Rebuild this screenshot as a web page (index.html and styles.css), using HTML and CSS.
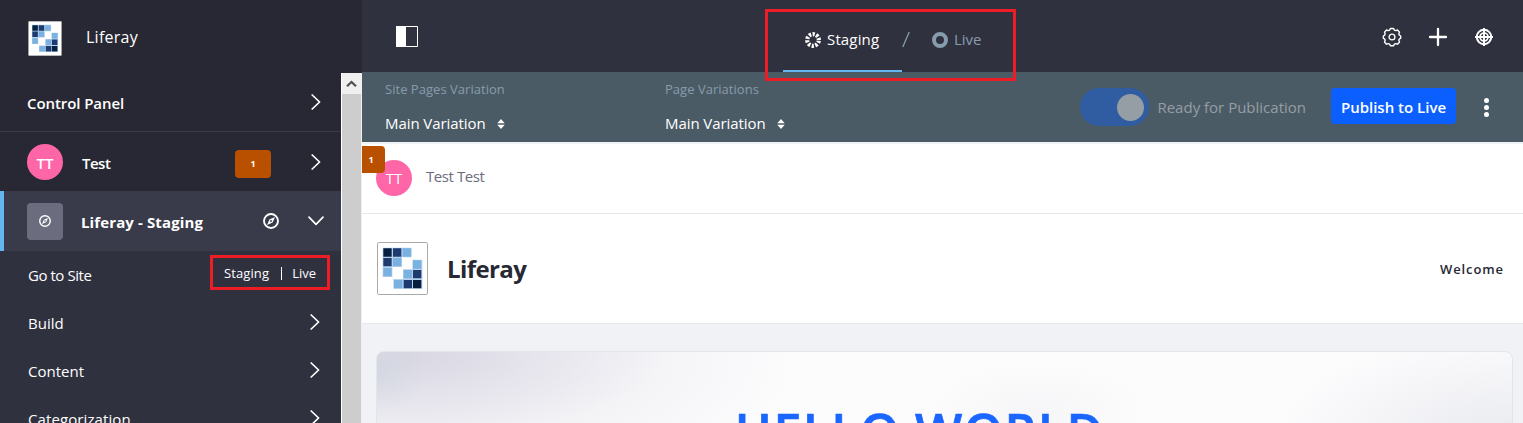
FILE: index.html
```html
<!DOCTYPE html>
<html lang="en">
<head>
<meta charset="utf-8">
<title>Liferay</title>
<link rel="stylesheet" href="styles.css">
</head>
<body>
<svg class="defs" width="0" height="0">
  <symbol id="logo" viewBox="0 0 153 159">
    <rect x="1.5" y="1.5" width="150" height="156" rx="4" fill="#fff" stroke="#a9a9a9" stroke-width="3"/>
    <path fill="#b5d1ee" d="M17 17h87v29H75v29H46v30H17zM106 53h30v87H49v-29h29V82h28z"/>
    <path fill="#06203f" d="M19 19h25v25H19zM108 114h25v25h-25z"/>
    <path fill="#1d3b6e" d="M48 19h25v25H48zM19 48h25v25H19zM108 84h25v25h-25zM80 114h25v25H80z"/>
    <path fill="#7ab1e1" d="M77 19h25v25H77zM48 48h25v25H48zM19 78h25v25H19zM108 55h25v25h-25zM80 84h25v25H80zM51 114h25v25H51z"/>
  </symbol>
  <symbol id="chev" viewBox="0 0 10 16"><path d="M1.2 1 8.6 8l-7.4 7" fill="none" stroke="currentColor" stroke-width="1.7" stroke-linecap="round" stroke-linejoin="round"/></symbol>
  <symbol id="compass" viewBox="0 0 16 16"><circle cx="8" cy="8" r="7" fill="none" stroke="currentColor" stroke-width="1.9"/><path d="M12 4 9.6 9.6 4 12l2.4-5.6z" fill="currentColor"/><circle cx="8" cy="8" r="1.1" fill="#555668"/></symbol>
  <symbol id="sort" viewBox="0 0 8 10"><path d="M4 0 7.7 4.3H.3zM4 10 .3 5.700h7.400z" fill="currentColor"/></symbol>
</svg>

<div class="app">
  <aside class="side">
    <header class="brand"><svg class="brand-logo"><use href="#logo"/></svg><span class="brand-name">Liferay</span></header>
    <div class="side-body">
      <nav class="menu">
        <a class="row panel"><span class="t-panel">Control Panel</span><svg class="chev"><use href="#chev"/></svg></a>
        <a class="row user"><span class="avatar bold">TT</span><span class="t-test">Test</span><span class="count">1</span><svg class="chev"><use href="#chev"/></svg></a>
        <a class="row site"><span class="site-icon"><svg><use href="#compass"/></svg></span><span class="t-site">Liferay - Staging</span><svg class="compass"><use href="#compass"/></svg><svg class="down" viewBox="0 0 16 10"><path d="M1 1.2 8 8.4l7-7.2" fill="none" stroke="currentColor" stroke-width="1.7" stroke-linecap="round" stroke-linejoin="round"/></svg></a>
        <div class="sub"><span class="t-goto">Go to Site</span><span class="goto-links"><span class="gs">Staging</span><i></i><span class="gl">Live</span></span></div>
        <a class="sub"><span>Build</span><svg class="chev"><use href="#chev"/></svg></a>
        <a class="sub"><span>Content</span><svg class="chev"><use href="#chev"/></svg></a>
        <a class="sub"><span class="t-cat">Categorization</span><svg class="chev"><use href="#chev"/></svg></a>
      </nav>
      <div class="scroll"><div class="scroll-up"><svg width="11" height="8" viewBox="0 0 11 8"><path d="M1 6.3 5.5 2 10 6.3" fill="none" stroke="#505050" stroke-width="2.2"/></svg></div></div>
    </div>
  </aside>

  <main class="main">
    <header class="topbar">
      <svg class="toggle-panel" width="22" height="21" viewBox="0 0 22 21"><path d="M.5.5h21v20H.5z" fill="none" stroke="#fff"/><path d="M0 0h10v21H0z" fill="#fff"/></svg>
      <div class="tabs">
        <a class="tab active"><svg width="16" height="16" viewBox="0 0 16 16"><circle cx="8" cy="8" r="5.8" fill="none" stroke="#fff" stroke-width="4.2" stroke-dasharray="2.2 1.444" stroke-dashoffset="-.7"/></svg><span class="t-stag">Staging</span></a>
        <svg class="slash" width="8" height="18" viewBox="0 0 8 18"><path d="M7.2 1 .8 16" stroke="#869cad" stroke-width="1.3"/></svg>
        <a class="tab live"><svg width="16" height="16" viewBox="0 0 16 16"><circle cx="8" cy="8" r="6" fill="none" stroke="#869cad" stroke-width="4"/></svg><span class="t-live">Live</span></a>
      </div>
      <div class="tools">
        <svg width="20" height="20" viewBox="0 0 20 20" fill="none" stroke="#fff" stroke-width="1.4"><path stroke-linejoin="round" d="M8.4 1.500h3.200l.8 1.600 1.300.5 1.800-.6 2 2.200-.7 1.700.5 1.200 1.400.9v2.200l-1.400.9-.5 1.200.7 1.700-2 2.200-1.800-.6-1.300.5-.8 1.600H8.400l-.8-1.600-1.300-.5-1.800.6-2-2.200.7-1.700-.5-1.200-1.400-.9V9l1.400-.9.5-1.200-.7-1.700 2-2.200 1.800.6 1.300-.5z"/><circle cx="10" cy="10" r="2.900"/></svg>
        <svg width="20" height="20" viewBox="0 0 20 20"><path d="M10 2v16M2 10h16" stroke="#fff" stroke-width="2.300" stroke-linecap="round"/></svg>
        <svg width="20" height="20" viewBox="0 0 20 20" fill="none" stroke="#fff"><circle cx="10" cy="10" r="7.200" stroke-width="2"/><circle cx="10" cy="10" r="4" stroke-width="1.700"/><path d="M10 1v18M1 10h18" stroke-width="1.900"/></svg>
      </div>
    </header>

    <section class="variations">
      <div class="var"><label class="l1">Site Pages Variation</label><span class="pick"><b>Main Variation</b><svg><use href="#sort"/></svg></span></div>
      <div class="var"><label class="l2">Page Variations</label><span class="pick"><b>Main Variation</b><svg><use href="#sort"/></svg></span></div>
      <div class="publish">
        <span class="switch"><i></i></span>
        <span class="ready">Ready for Publication</span>
        <button class="btn">Publish to Live</button>
        <span class="dots"><i></i><i></i><i></i></span>
      </div>
    </section>

    <section class="userbar"><span class="avatar light">TT</span><span class="t-user">Test Test</span><span class="corner">1</span></section>
    <section class="sitehead"><svg class="site-logo"><use href="#logo"/></svg><h2>Liferay</h2><a class="welcome">Welcome</a></section>
    <section class="content"><div class="hero"><h1>HELLO WORLD</h1></div></section>
  </main>
</div>
<div class="mark mark-top"></div>
<div class="mark mark-side"></div>
</body>
</html>
```
FILE: styles.css
```css
* { box-sizing: border-box; }
body { margin: 0; width: 1523px; height: 423px; overflow: hidden; font-family: "Open Sans", "Noto Sans", sans-serif; font-size: 15px; color: #fff; }
svg { display: block; flex: none; }
.defs { position: absolute; }
span, label, h1, h2, b { white-space: nowrap; }
.app { display: flex; width: 1523px; height: 423px; overflow: hidden; }

.side { width: 362px; flex: none; background: #272833; }
.brand { height: 73px; display: flex; align-items: center; padding: 3px 0 0 28px; }
.brand-logo { width: 34px; height: 35px; }
.brand-name { margin-left: 24px; font-size: 16px; letter-spacing: .25px; margin-top: -3px; }
.side-body { display: flex; height: 350px; }
.menu { width: 341px; height: 350px; overflow: hidden; background: #30313f; }
.row { display: flex; align-items: center; height: 59px; background: #272833; font-weight: 600; padding-left: 27px; padding-right: 20px; }
.panel { border-bottom: 1px solid #393a4a; }
.t-panel { padding-top: 2px; letter-spacing: -.08px; }
.chev { width: 10px; height: 16px; margin-left: auto; }
.user { padding-top: 1px; }
.avatar { width: 36px; height: 36px; border-radius: 50%; background: #ff66a8; display: flex; align-items: center; justify-content: center; flex: none; }
.bold { font-size: 15px; font-weight: 600; padding-top: 2px; }
.t-test { margin-left: 19px; padding-top: 2px; letter-spacing: -.5px; }
.count { width: 36px; height: 28px; border-radius: 4px; background: #b95000; margin-left: auto; margin-right: 40px; margin-top: 3px; font-size: 9px; font-weight: 700; display: flex; align-items: center; justify-content: center; }
.user .chev { margin-left: 0; }
.site { height: 60px; background: #393a4a; border-left: 4px solid #65b6f0; padding-left: 23px; padding-right: 17px; }
.site-icon { width: 36px; height: 37px; border-radius: 4px; background: #6b6c7e; display: flex; align-items: center; justify-content: center; }
.site-icon svg { width: 12px; height: 12px; margin-right: 1px; }
.t-site { margin-left: 18px; font-weight: 700; padding-top: 2px; letter-spacing: .12px; }
.compass { width: 16px; height: 16px; margin-left: auto; margin-right: 29px; }
.down { width: 16px; height: 10px; }
.sub { height: 48px; display: flex; align-items: center; padding: 0 21px 0 28px; }
.t-goto { letter-spacing: -.45px; }
.t-cat { letter-spacing: .1px; }
.goto-links { margin-left: auto; display: flex; align-items: center; font-size: 13px; margin-right: 4px; margin-top: -4px; }
.gs { letter-spacing: .12px; }
.goto-links i { width: 1px; height: 13px; background: #fff; margin: 0 10px 0 12px; }
.sub .chev { margin-top: -2px; }
.scroll { width: 21px; background: #cdcdcd; border-left: 1px solid #fff; border-right: 1px solid #f0f0f0; }
.scroll-up { height: 21px; background: #f0f0f0; display: flex; align-items: center; justify-content: center; }

.main { flex: 1; min-width: 0; display: flex; flex-direction: column; background: #fff; }
.topbar { height: 72px; background: #30313f; display: flex; align-items: center; padding-left: 34px; padding-right: 29px; flex: none; }
.tabs { display: flex; align-items: center; margin-left: 365px; height: 72px; }
.tab { display: flex; align-items: center; height: 72px; gap: 6px; padding-top: 7px; }
.tab span { margin-top: -2px; }
.active { width: 119px; padding-left: 22px; padding-top: 9px; border-bottom: 2px solid #65b6f0; }
.t-stag { letter-spacing: .15px; }
.slash { margin-top: 8px; }
.live { margin-left: 22px; color: #869cad; }
.tools { margin-left: auto; display: flex; gap: 26px; padding-top: 2px; }
.variations { height: 70px; background: #4b5b65; display: flex; padding-left: 23px; padding-right: 34px; flex: none; }
.var { width: 280px; padding-top: 8px; display: flex; flex-direction: column; }
.var label { font-size: 13px; line-height: 18px; color: #869cad; letter-spacing: .03px; }
.pick { display: flex; align-items: center; gap: 11px; margin-top: 15px; line-height: 20px; }
.pick b { font-weight: 400; letter-spacing: -.07px; }
.pick svg { width: 8px; height: 10px; margin-top: 1px; }
.publish { margin-left: auto; display: flex; align-items: center; }
.switch { width: 69px; height: 38px; border-radius: 19px; background: #305da1; display: flex; align-items: center; justify-content: flex-end; padding-right: 5px; }
.switch i { width: 27px; height: 27px; border-radius: 50%; background: #959ea4; }
.ready { margin-left: 8px; color: #959ea4; }
.btn { width: 125px; height: 36px; margin-left: 25px; border: 0; border-radius: 4px; background: #0b5fff; color: #fff; font: 600 15px "Open Sans", sans-serif; padding: 2px 0 0; margin-top: -2px; white-space: nowrap; }
.dots { display: flex; flex-direction: column; gap: 2px; margin-left: 28px; margin-top: 1px; }
.dots i { width: 5px; height: 5px; border-radius: 50%; background: #fff; }

.userbar { height: 72px; position: relative; border-top: 2px solid #f1f2f5; border-bottom: 1px solid #e7e7ed; display: flex; padding: 16px 0 0 14px; flex: none; color: #6b6c7e; }
.light { color: #fff; }
.t-user { margin: 6px 0 0 14px; line-height: 21px; letter-spacing: -.42px; }
.corner { position: absolute; left: 0; top: 2px; width: 23px; height: 27px; border-radius: 0 4px 4px 0; background: #b95000; color: #fff; font-size: 9px; font-weight: 700; display: flex; align-items: center; justify-content: center; padding-right: 5px; }
.sitehead { height: 109px; display: flex; align-items: center; padding: 0 19px 0 15px; flex: none; }
.site-logo { width: 51px; height: 53px; }
.sitehead h2 { margin: 0 0 0 19px; font-size: 24px; font-weight: 700; color: #272833; letter-spacing: -.6px; }
.welcome { margin-left: auto; color: #272833; font-weight: 600; font-size: 13px; letter-spacing: .9px; }
.content { height: 100px; flex: none; background: #f1f2f5; border-top: 1px solid #e7e7ed; padding: 27px 10px 0 14px; }
.hero { height: 400px; border: 1px solid #e4e5ea; border-radius: 8px; overflow: hidden; padding-top: 46px;
  background:
    radial-gradient(ellipse 50px 40px at 0 20px, rgba(205,212,222,.6), transparent),
    radial-gradient(ellipse 260px 85px at 30px 0, rgba(215,213,225,.9), rgba(222,220,232,.5) 50%, transparent),
    radial-gradient(ellipse 420px 150px at 0 10px, rgba(224,224,232,.8), transparent),
    radial-gradient(ellipse 110px 50px at 660px 60px, rgba(243,243,245,.7), transparent),
    radial-gradient(ellipse 240px 110px at 1136px 90px, rgba(229,230,236,.85), transparent),
    #fcfcfd; }
.hero h1 { margin: 0; text-align: center; padding-right: 50px; font-size: 50px; line-height: 66px; font-weight: 600; letter-spacing: 1.4px; color: #1a66ff; -webkit-text-stroke: .7px #1a66ff; }

.mark { position: absolute; border: 3px solid #ee1c24; }
.mark-top { left: 765px; top: 9px; width: 251px; height: 72px; }
.mark-side { left: 210px; top: 255px; width: 120px; height: 35px; }
```
